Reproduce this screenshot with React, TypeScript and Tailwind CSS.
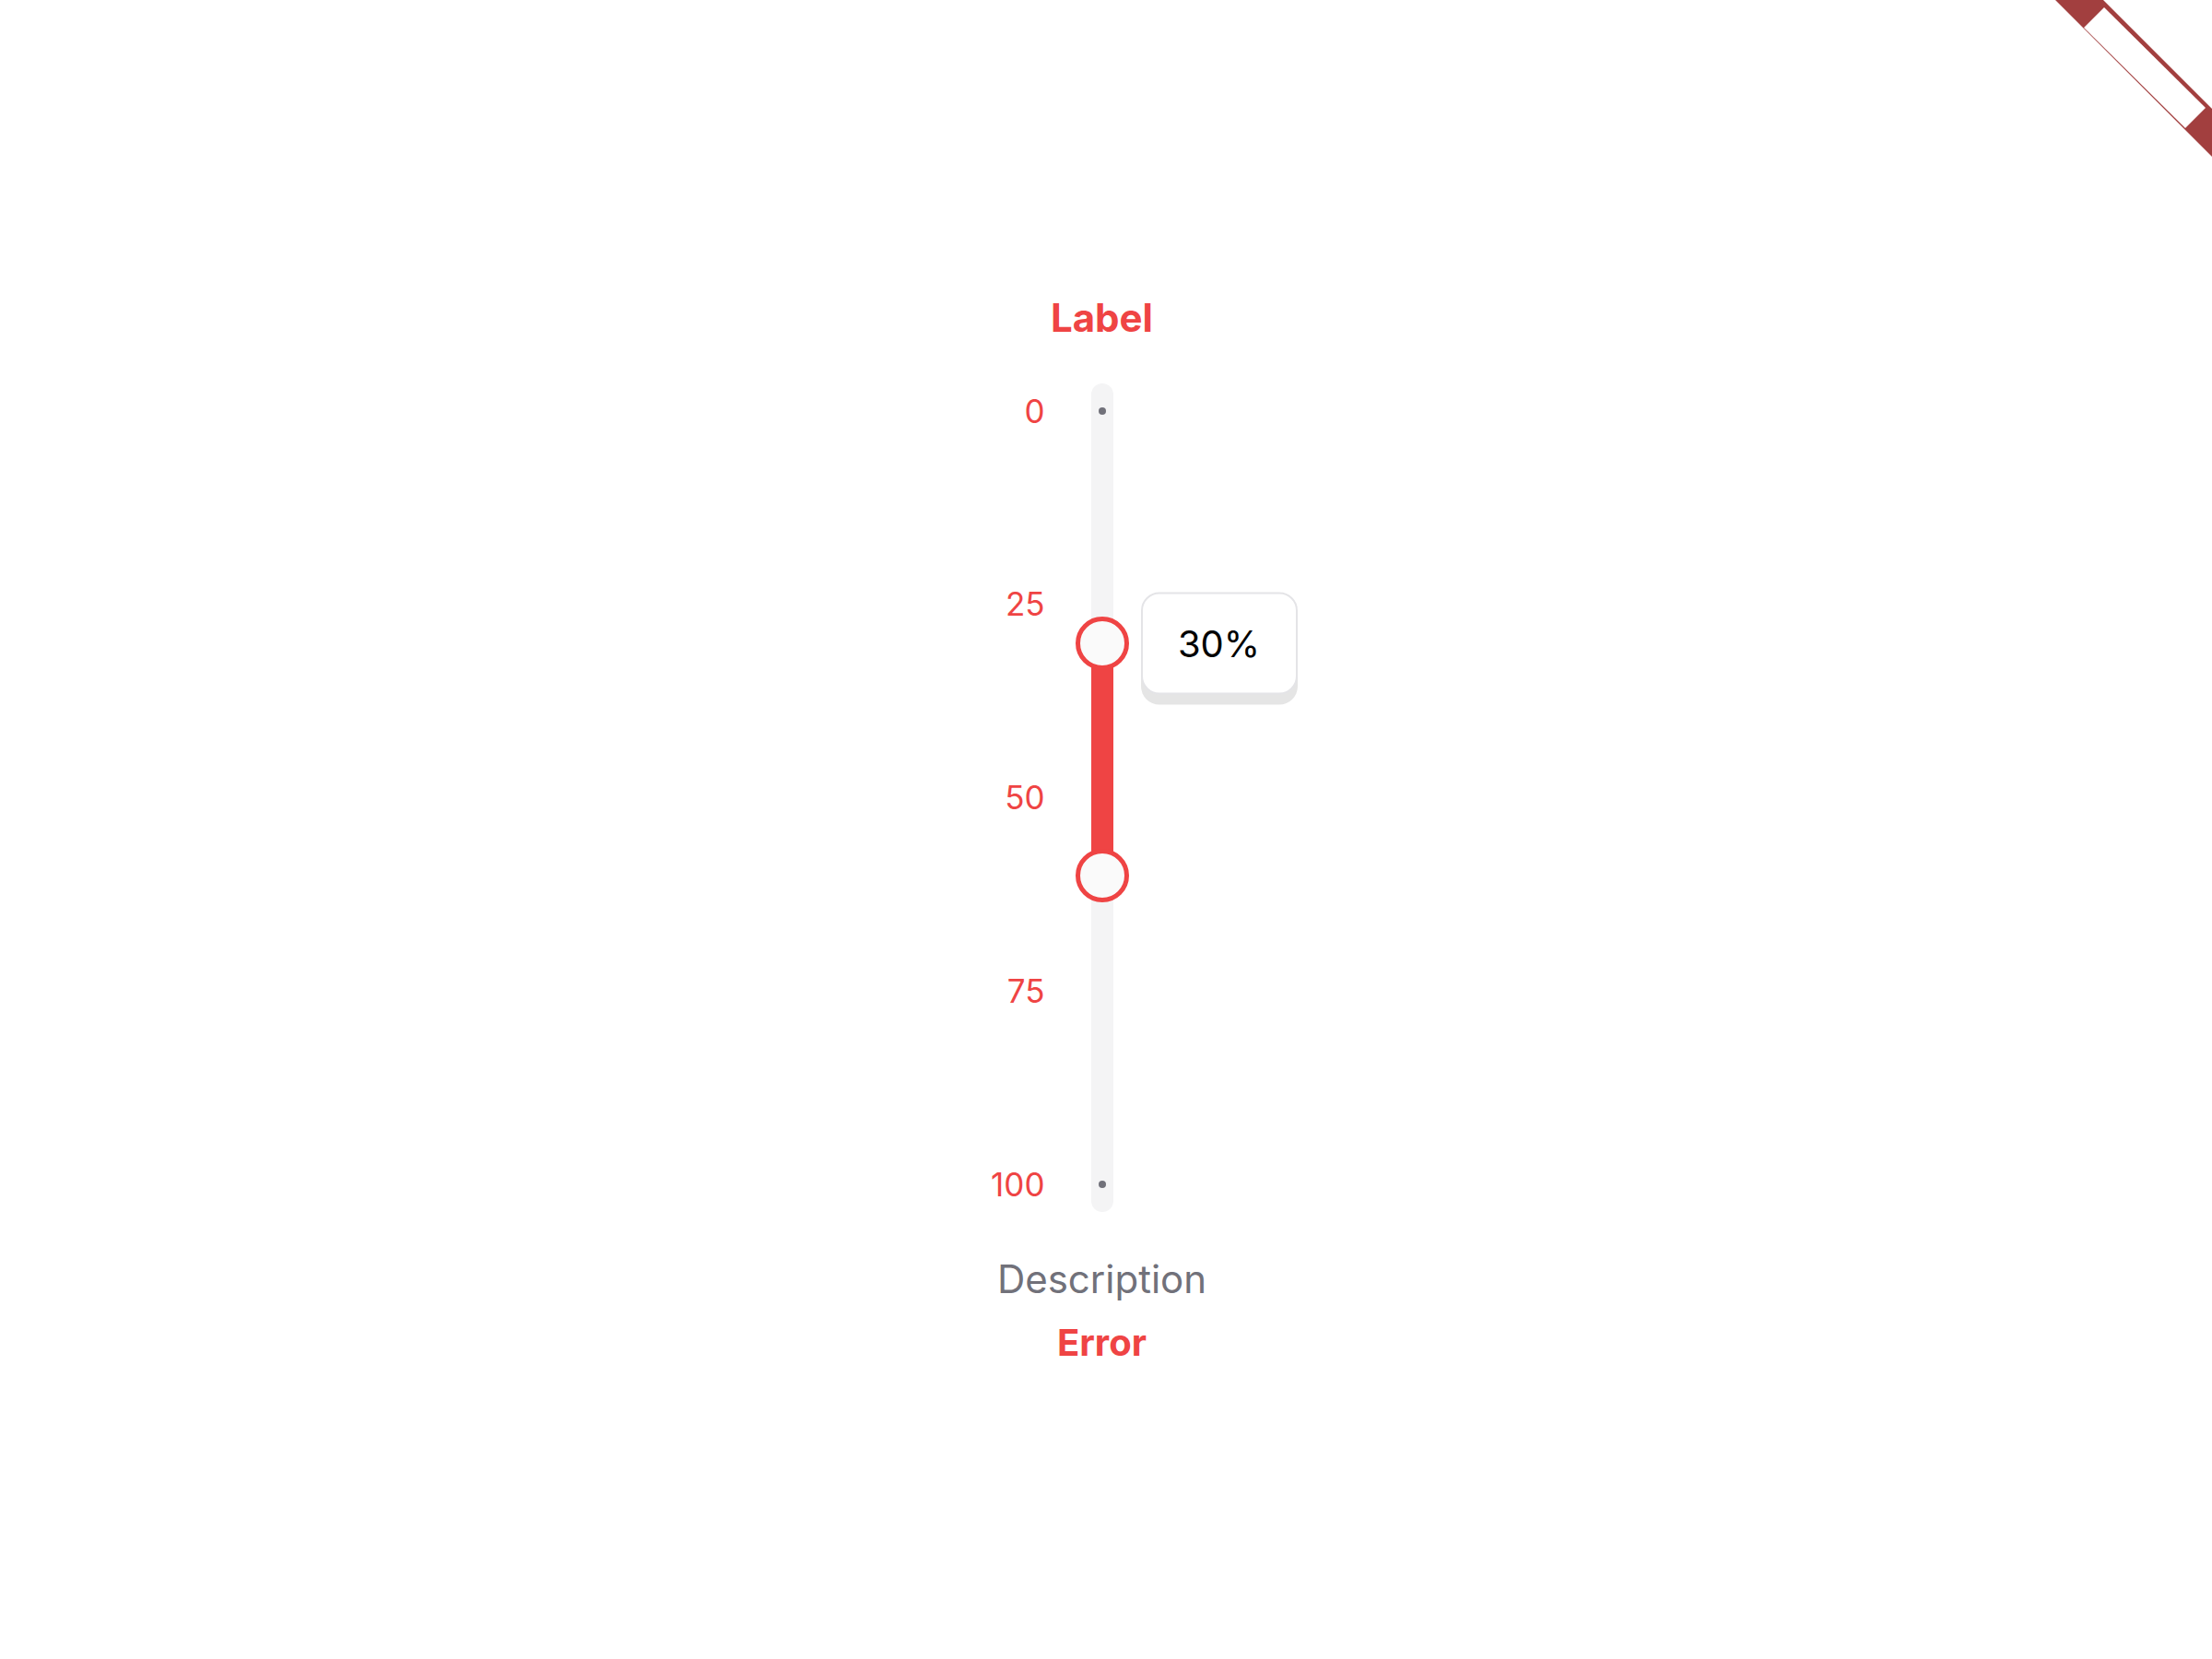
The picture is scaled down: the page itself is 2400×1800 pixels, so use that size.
import React from "react";

const ticks = [0, 25, 50, 75, 100];
const PAD = 30;
const SPAN = 840;

function Thumb({ y }: { y: number }) {
  return (
    <div
      className="absolute left-1/2 h-[58px] w-[58px] -translate-x-1/2 -translate-y-1/2 rounded-full border-[5px] border-[#ef4444] bg-[#fafafa]"
      style={{ top: y }}
    />
  );
}

export default function App() {
  const a = 30;
  const b = 60;
  const ya = PAD + (SPAN * a) / 100;
  const yb = PAD + (SPAN * b) / 100;
  return (
    <div className="relative min-h-[1800px] w-full overflow-hidden bg-white font-['Inter','Noto_Sans',sans-serif]">
      <svg className="absolute right-0 top-0" width="200" height="180" viewBox="0 0 200 180">
        <polygon points="30,0 82,0 200,118 200,170" fill="#a23f3f" />
        <polygon points="61,30 83,8 193,117 171,139" fill="#ffffff" />
      </svg>
      <div className="flex flex-col items-center pr-[9px] pt-[324px]">
        <div className="text-[42px] font-bold leading-none text-[#ef4444]">Label</div>
        <div className="mt-[50px] grid w-[424px] grid-cols-[200px_24px_200px]">
          <div className="flex h-[899px] flex-col items-end justify-between py-[12.5px] pr-[50px] text-[35px] leading-none text-[#ef4444]">
            {ticks.map((t) => (
              <div key={t}>{t}</div>
            ))}
          </div>
          <div className="relative h-[899px] rounded-full bg-[#f4f4f5]">
            <div className="flex h-full flex-col items-center justify-between py-[26px]">
              <div className="h-[8px] w-[8px] rounded-full bg-[#71717a]" />
              <div className="h-[8px] w-[8px] rounded-full bg-[#71717a]" />
            </div>
            <div className="absolute left-0 w-full bg-[#ef4444]" style={{ top: ya, height: yb - ya }} />
            <Thumb y={ya} />
            <Thumb y={yb} />
            <div
              className="absolute left-[54px] flex h-[111px] w-[170px] -translate-y-1/2 items-center justify-center rounded-[20px] border-2 border-[#e4e4e7] bg-white text-[40px] leading-none text-black shadow-[0_11px_0_#e5e5e5]"
              style={{ top: ya }}
            >
              30%
            </div>
          </div>
          <div />
        </div>
        <div className="mt-[52px] text-[42px] leading-none text-[#71717a]">Description</div>
        <div className="mt-[28px] text-[40px] font-bold leading-none text-[#ef4444]">Error</div>
      </div>
    </div>
  );
}
